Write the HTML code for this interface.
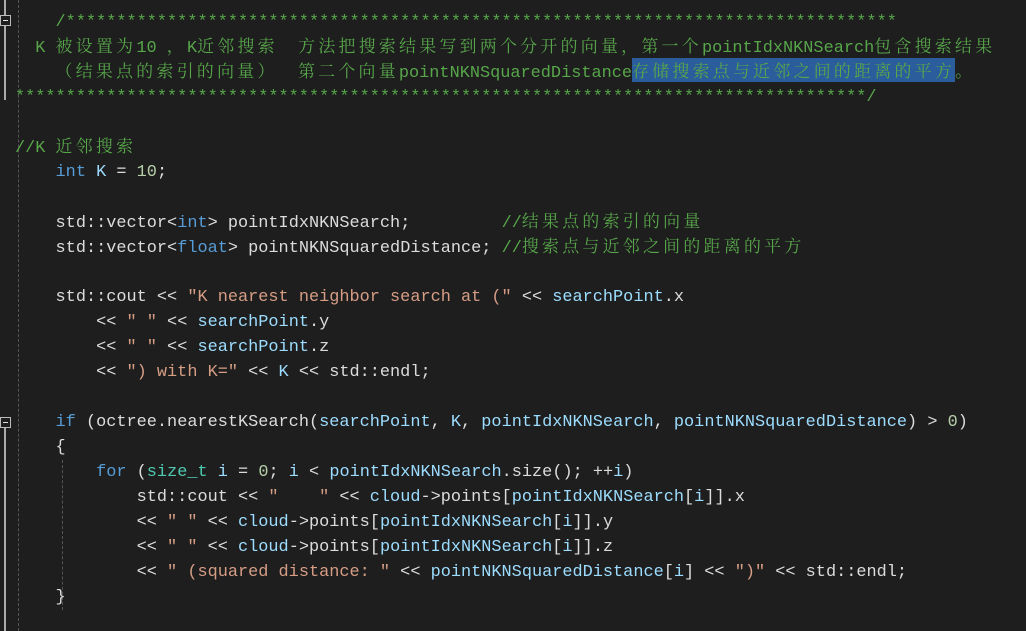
<!DOCTYPE html>
<html><head><meta charset="utf-8"><style>
html,body{margin:0;padding:0;background:#1e1e1e;width:1026px;height:631px;overflow:hidden}
#code{position:absolute;left:15px;top:10px;font-family:"Liberation Mono","Noto Sans CJK SC",monospace;font-size:16.9px;color:#dcdcdc}
#code div{height:25px;line-height:25px;overflow:visible;white-space:pre}
.c{font-family:"Noto Serif CJK SC","Noto Sans CJK SC",serif;letter-spacing:3.3px;line-height:20px}
.g{color:#57a64a}.k{color:#569cd6}.t{color:#4ec9b0}.s{color:#d69d85}.v{color:#9cdcfe}.n{color:#b5cea8}
.sel{background:#2b5c9c}
.gut{position:absolute;left:4px;width:2px;background:#aaa}
.box{position:absolute;left:0;width:9px;height:9px;border:1px solid #bbb;background:#1e1e1e}
.box:after{content:"";position:absolute;left:2px;top:4px;width:5px;height:1px;background:#ddd}
.dash{position:absolute;left:18px;border-left:1px dashed #555}
.dash2{position:absolute;left:62px;border-left:1px dashed #555}
</style></head><body>
<div class="gut" style="top:0;height:100px"></div>
<div class="gut" style="top:420px;height:211px"></div>
<div class="box" style="top:15px"></div>
<div class="box" style="top:417px"></div>
<div class="dash" style="top:0;height:631px"></div>
<div class="dash2" style="top:460px;height:150px"></div>
<div id="code"><div class="g">    /**********************************************************************************</div><div class="g">  K <span class="c">被设置为</span>10 <span class="c">，</span>K<span class="c">近邻搜索</span>  <span class="c">方法把搜索结果写到两个分开的向量，第一个</span>pointIdxNKNSearch<span class="c">包含搜索结果</span></div><div class="g">    <span class="c">（结果点的索引的向量）</span>  <span class="c">第二个向量</span>pointNKNSquaredDistance<span class="sel c">存储搜索点与近邻之间的距离的平方</span><span class="c">。</span></div><div class="g">************************************************************************************/</div><div> </div><div class="g">//K <span class="c">近邻搜索</span></div><div>    <span class="k">int</span> <span class="v">K</span> = <span class="n">10</span>;</div><div> </div><div>    std::vector&lt;<span class="k">int</span>&gt; pointIdxNKNSearch;         <span class="g">//<span class="c">结果点的索引的向量</span></span></div><div>    std::vector&lt;<span class="k">float</span>&gt; pointNKNSquaredDistance; <span class="g">//<span class="c">搜索点与近邻之间的距离的平方</span></span></div><div> </div><div>    std::cout &lt;&lt; <span class="s">"K nearest neighbor search at ("</span> &lt;&lt; <span class="v">searchPoint</span>.x</div><div>        &lt;&lt; <span class="s">" "</span> &lt;&lt; <span class="v">searchPoint</span>.y</div><div>        &lt;&lt; <span class="s">" "</span> &lt;&lt; <span class="v">searchPoint</span>.z</div><div>        &lt;&lt; <span class="s">") with K="</span> &lt;&lt; <span class="v">K</span> &lt;&lt; std::endl;</div><div> </div><div>    <span class="k">if</span> (octree.nearestKSearch(<span class="v">searchPoint</span>, <span class="v">K</span>, <span class="v">pointIdxNKNSearch</span>, <span class="v">pointNKNSquaredDistance</span>) &gt; <span class="n">0</span>)</div><div>    {</div><div>        <span class="k">for</span> (<span class="t">size_t</span> <span class="v">i</span> = <span class="n">0</span>; <span class="v">i</span> &lt; <span class="v">pointIdxNKNSearch</span>.size(); ++<span class="v">i</span>)</div><div>            std::cout &lt;&lt; <span class="s">"    "</span> &lt;&lt; <span class="v">cloud</span>-&gt;points[<span class="v">pointIdxNKNSearch</span>[<span class="v">i</span>]].x</div><div>            &lt;&lt; <span class="s">" "</span> &lt;&lt; <span class="v">cloud</span>-&gt;points[<span class="v">pointIdxNKNSearch</span>[<span class="v">i</span>]].y</div><div>            &lt;&lt; <span class="s">" "</span> &lt;&lt; <span class="v">cloud</span>-&gt;points[<span class="v">pointIdxNKNSearch</span>[<span class="v">i</span>]].z</div><div>            &lt;&lt; <span class="s">" (squared distance: "</span> &lt;&lt; <span class="v">pointNKNSquaredDistance</span>[<span class="v">i</span>] &lt;&lt; <span class="s">")"</span> &lt;&lt; std::endl;</div><div>    }</div></div>
</body></html>
